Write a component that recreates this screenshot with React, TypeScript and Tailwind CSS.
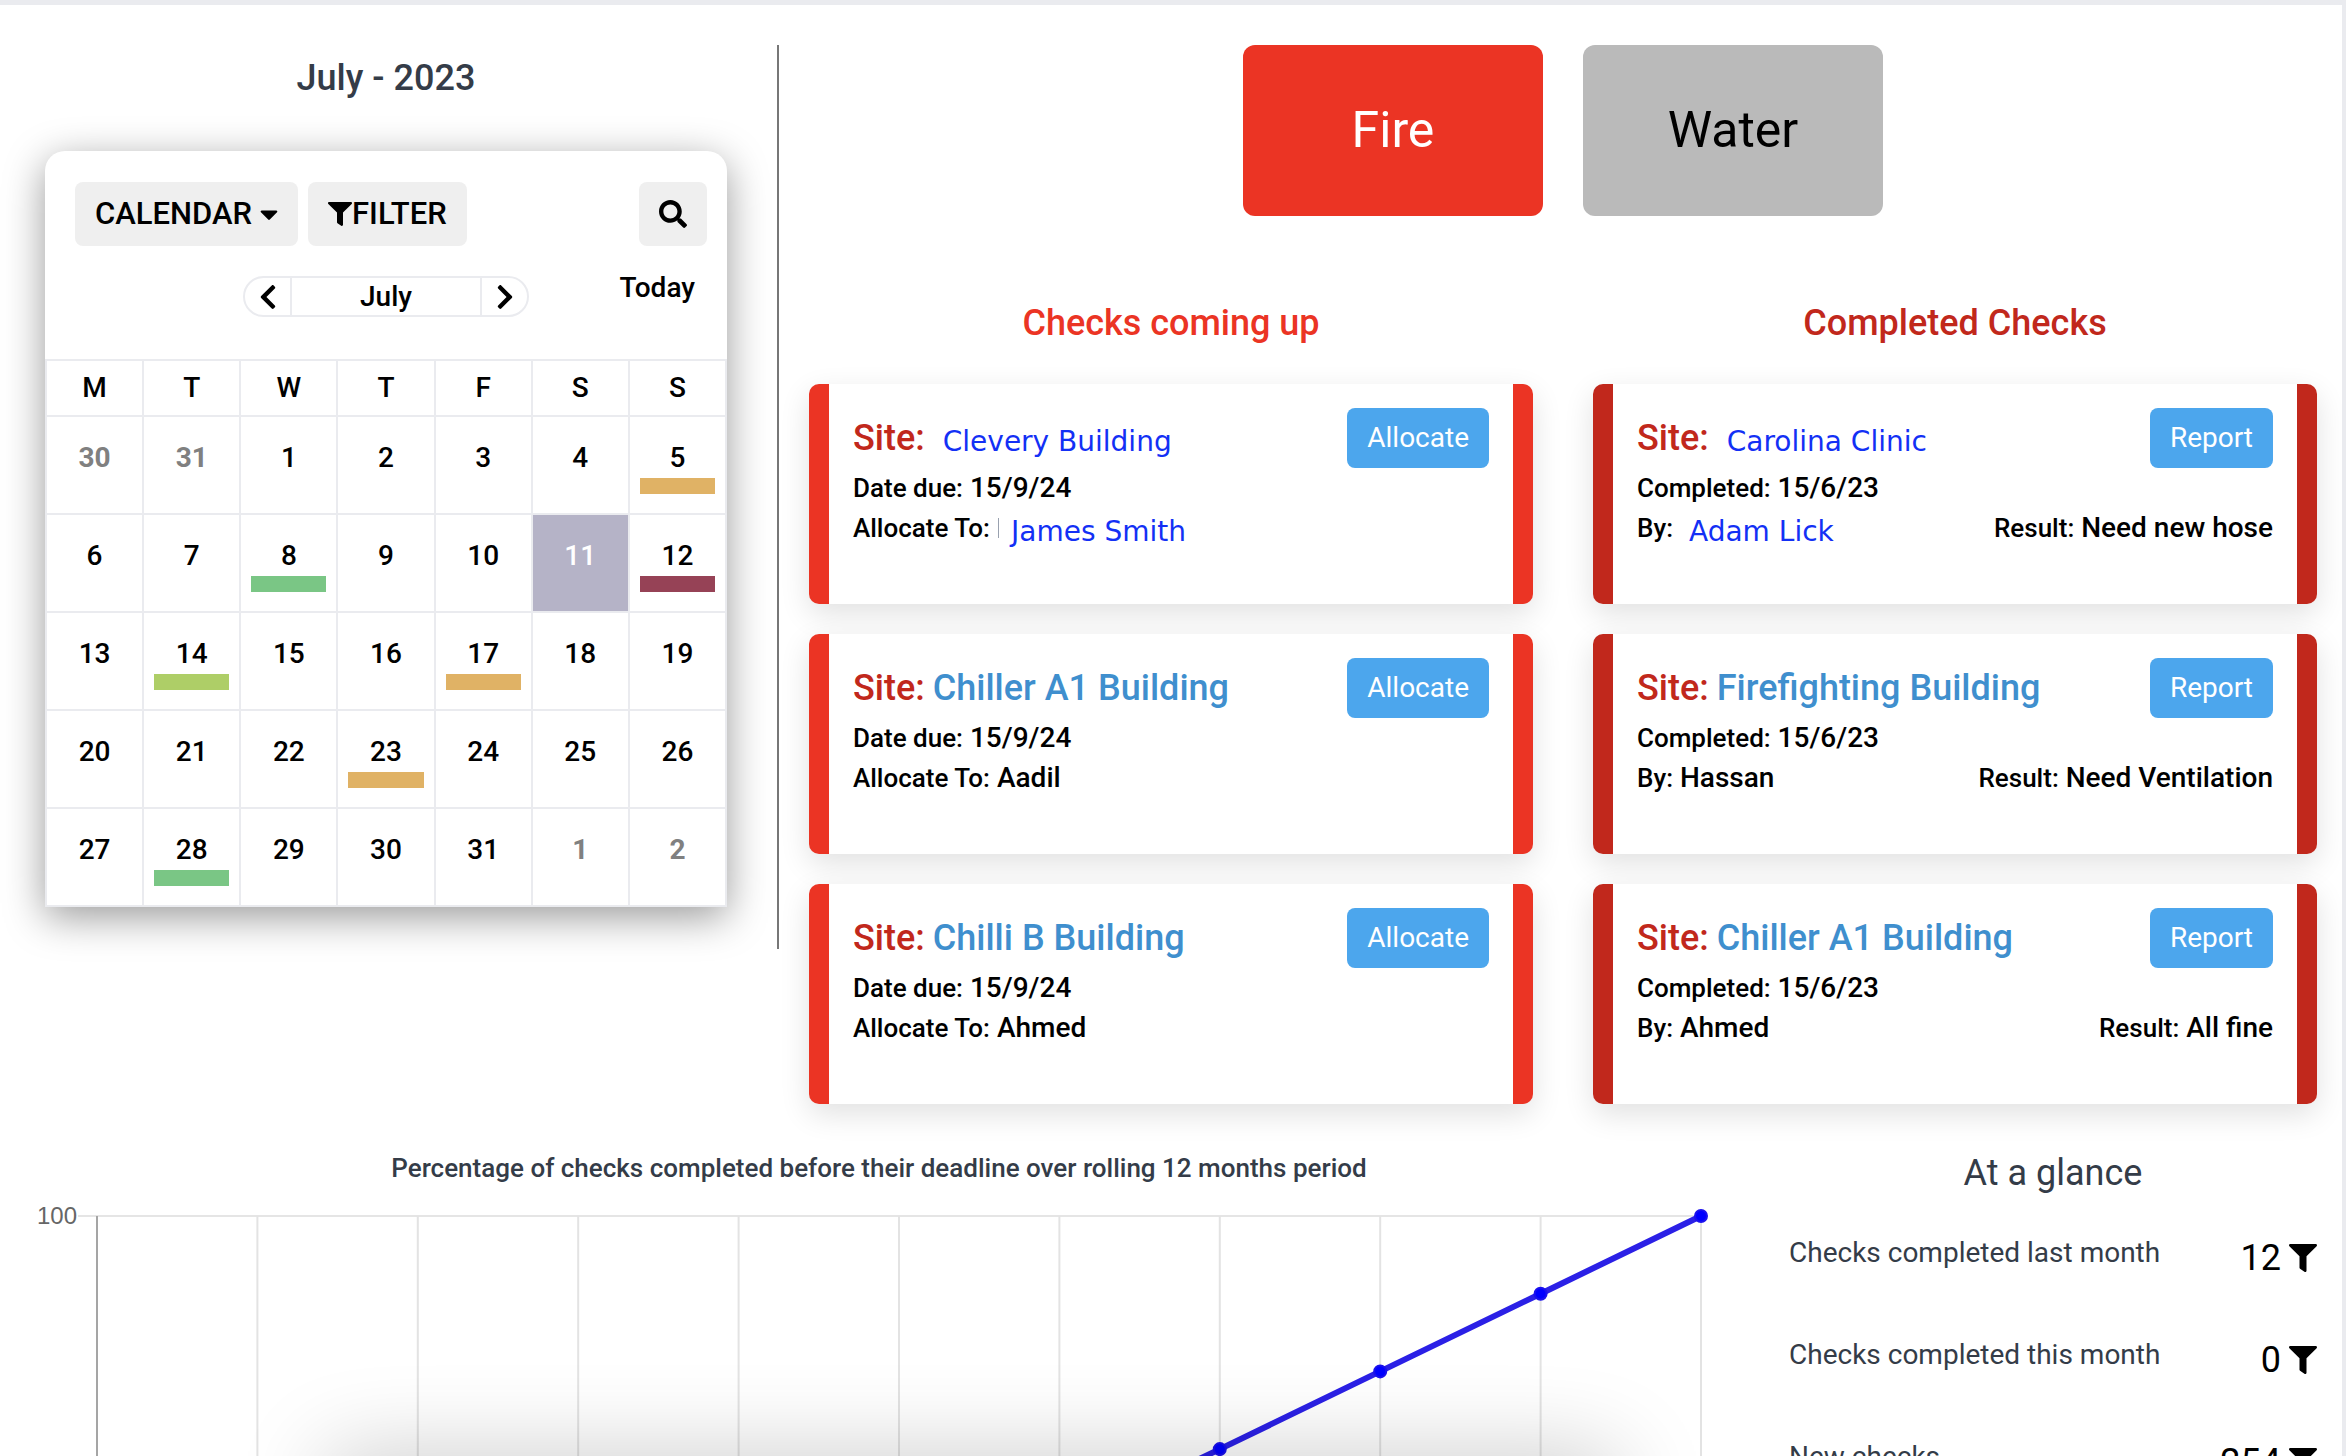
import { ReactNode } from "react"
import { FaCaretDown, FaChevronLeft, FaChevronRight, FaFilter, FaSearch } from "react-icons/fa"

type Day = {
    day: number,
    bar?: string,
    muted?: boolean,
    selected?: boolean
}

type Check = {
    id: number,
    site: string,
    person: string,
    result?: string,
    siteLink?: boolean,
    personLink?: boolean
}

const weekDays = ['M', 'T', 'W', 'T', 'F', 'S', 'S']

const amber = 'bg-[#e0b265]'
const green = 'bg-[#7ac685]'
const lime = 'bg-[#aece67]'
const wine = 'bg-[#964256]'

const weeks: Day[][] = [
    [{ day: 30, muted: true }, { day: 31, muted: true }, { day: 1 }, { day: 2 }, { day: 3 }, { day: 4 }, { day: 5, bar: amber }],
    [{ day: 6 }, { day: 7 }, { day: 8, bar: green }, { day: 9 }, { day: 10 }, { day: 11, selected: true }, { day: 12, bar: wine }],
    [{ day: 13 }, { day: 14, bar: lime }, { day: 15 }, { day: 16 }, { day: 17, bar: amber }, { day: 18 }, { day: 19 }],
    [{ day: 20 }, { day: 21 }, { day: 22 }, { day: 23, bar: amber }, { day: 24 }, { day: 25 }, { day: 26 }],
    [{ day: 27 }, { day: 28, bar: green }, { day: 29 }, { day: 30 }, { day: 31 }, { day: 1, muted: true }, { day: 2, muted: true }],
]

const upcoming: Check[] = [
    { id: 1, site: 'Clevery Building', person: 'James Smith', siteLink: true, personLink: true },
    { id: 2, site: 'Chiller A1 Building', person: 'Aadil' },
    { id: 3, site: 'Chilli B Building', person: 'Ahmed' },
]

const completed: Check[] = [
    { id: 1, site: 'Carolina Clinic', person: 'Adam Lick', result: 'Need new hose', siteLink: true, personLink: true },
    { id: 2, site: 'Firefighting Building', person: 'Hassan', result: 'Need Ventilation' },
    { id: 3, site: 'Chiller A1 Building', person: 'Ahmed', result: 'All fine' },
]

const stats = [
    { label: 'Checks completed last month', value: 12 },
    { label: 'Checks completed this month', value: 0 },
    { label: 'New checks', value: 254 },
]

function Calendar() {
    return (
        <section className="rounded-t-[20px] bg-white shadow-[0_10px_40px_rgba(0,0,0,0.4)]">
            <div className="flex items-center gap-[10px] px-[30px] pt-[31px] pr-5">
                <button className="flex h-16 items-center gap-2 rounded-lg bg-[#efefef] px-5 text-[31px] font-medium">
                    CALENDAR <FaCaretDown className="h-[30px] w-[18px]" />
                </button>
                <button className="flex h-16 items-center rounded-lg bg-[#efefef] px-5 text-[31px] font-medium">
                    <FaFilter className="size-6" />FILTER
                </button>
                <button aria-label="Search" className="ml-auto flex h-16 items-center rounded-lg bg-[#efefef] px-5">
                    <FaSearch className="size-7" />
                </button>
            </div>
            <div className="grid grid-cols-[1fr_286px_1fr] pt-[22px] pb-[42px]">
                <div className="col-start-2 mt-2 flex h-[41px] items-stretch rounded-full border-2 border-[#eaebef] text-[28px] font-medium">
                    <button aria-label="Previous month" className="flex w-[45px] items-center justify-center">
                        <FaChevronLeft className="size-7" />
                    </button>
                    <span className="flex flex-1 items-center justify-center border-x-2 border-[#eaebef]">July</span>
                    <button aria-label="Next month" className="flex w-[45px] items-center justify-center">
                        <FaChevronRight className="size-7" />
                    </button>
                </div>
                <button className="mr-8 self-start justify-self-end text-[28px] leading-10 font-medium">Today</button>
            </div>
            <table className="w-full table-fixed border-collapse text-center text-[28px] font-medium">
                <thead>
                    <tr className="h-14">
                        {weekDays.map((name, i) => (
                            <th key={i} className="border-2 border-[#eaebef] font-medium">{name}</th>
                        ))}
                    </tr>
                </thead>
                <tbody>
                    {weeks.map((week, i) => (
                        <tr key={i} className="h-[98px]">
                            {week.map((item, j) => (
                                <td
                                    key={j}
                                    className={`border-2 border-[#eaebef] px-[10px] align-top ${item.selected ? 'bg-[#b5b3c7] text-white' : ''} ${item.muted ? 'font-bold text-[#808080]' : ''}`}
                                >
                                    <div className="pt-[21px] leading-10">{item.day}</div>
                                    {item.bar && <div className={`h-4 ${item.bar}`}></div>}
                                </td>
                            ))}
                        </tr>
                    ))}
                </tbody>
            </table>
        </section>
    )
}

type CheckCardProps = {
    check: Check,
    border: string,
    action: string,
    dateLabel: string,
    date: string,
    personLabel: string
}

function CheckCard({ check, border, action, dateLabel, date, personLabel }: CheckCardProps) {
    return (
        <article className={`h-[220px] rounded-[10px] border-x-[20px] bg-white p-6 text-[28px] leading-10 font-medium whitespace-nowrap shadow-[0_10px_30px_rgba(0,0,0,0.12)] ${border}`}>
            <div className="flex h-15 items-center justify-between">
                <h3 className="flex items-center text-[36px] text-[#c1281c]">
                    Site:
                    {check.siteLink ?
                        <a href="#" className="pt-2 pl-[18px] font-['DejaVu_Sans',sans-serif] text-[28px] font-normal text-[#1330f5]">{check.site}</a>
                        :
                        <a href="#" className="pl-2 text-[#3f8fce]">{check.site}</a>
                    }
                </h3>
                <button className="h-15 rounded-lg bg-[#4ca6ed] px-5 font-normal text-white">{action}</button>
            </div>
            <p><span className="text-[26px]">{dateLabel}</span> {date}</p>
            <div className="flex h-10 justify-between">
                {check.personLink ?
                    <p className="flex items-center">
                        <span className="text-[26px]">{personLabel}</span>
                        {!check.result && <span className="ml-2 h-5 w-px bg-gray-400"></span>}
                        <a href="#" className={`pt-2 font-['DejaVu_Sans',sans-serif] font-normal text-[#1330f5] ${check.result ? 'pl-4' : 'pl-3'}`}>{check.person}</a>
                    </p>
                    :
                    <p><span className="text-[26px]">{personLabel}</span> {check.person}</p>
                }
                {check.result && <p><span className="text-[26px]">Result:</span> {check.result}</p>}
            </div>
        </article>
    )
}

function Column({ title, color, children }: { title: string, color: string, children: ReactNode }) {
    return (
        <section className="flex flex-col gap-10">
            <h2 className={`text-center text-[36px] leading-[42px] font-medium ${color}`}>{title}</h2>
            <div className="flex flex-col gap-[30px]">{children}</div>
        </section>
    )
}

function Chart() {
    const left = 73
    const top = 20
    const step = 160.4
    const drop = 77.7
    const points = [5, 6, 7, 8, 9, 10].map(i => ({ x: left + i * step, y: top + (10 - i) * drop }))

    return (
        <svg viewBox="0 0 1710 330" className="w-full" role="img" aria-label="Percentage of checks completed">
            <text x="53" y="28" textAnchor="end" fontSize="24" fill="#666" className="font-['Liberation_Sans',sans-serif]">100</text>
            <line x1="54" y1={top} x2={left + 10 * step} y2={top} stroke="#e5e5e5" strokeWidth="2" />
            {Array.from({ length: 11 }, (_, i) => (
                <line key={i} x1={left + i * step} y1={top} x2={left + i * step} y2="330" stroke={i === 0 ? '#a5a5a5' : '#e3e3e3'} strokeWidth="2" />
            ))}
            <polyline points={points.map(p => `${p.x},${p.y}`).join(' ')} fill="none" stroke="#2b20e6" strokeWidth="6" />
            {points.map(p => <circle key={p.x} cx={p.x} cy={p.y} r="6" fill="#00f" stroke="#1a10ee" strokeWidth="2" />)}
        </svg>
    )
}

export default function App() {
    return (
        <main className="relative h-screen overflow-hidden border-t-[5px] border-r-4 border-[#eaebef] bg-white font-[Roboto,sans-serif] text-black">
            <div className="flex pt-10 pr-[25px] pl-[45px]">
                <div className="w-[682px] shrink-0">
                    <h1 className="pb-10 text-center text-[36px] leading-[66px] font-medium text-[#343c48]">July - 2023</h1>
                    <Calendar />
                </div>
                <div className="ml-[50px] h-[904px] w-[2px] shrink-0 bg-[#777]"></div>
                <div className="ml-[30px] flex-1">
                    <div className="flex justify-center gap-10">
                        <button className="h-[171px] w-[300px] rounded-xl bg-[#eb3424] text-[50px] text-white">Fire</button>
                        <button className="h-[171px] w-[300px] rounded-xl bg-[#bababa] text-[50px]">Water</button>
                    </div>
                    <div className="grid grid-cols-2 gap-[60px] pt-[86px]">
                        <Column title="Checks coming up" color="text-[#eb3424]">
                            {upcoming.map(check => (
                                <CheckCard key={check.id} check={check} border="border-[#eb3424]" action="Allocate" dateLabel="Date due:" date="15/9/24" personLabel="Allocate To:" />
                            ))}
                        </Column>
                        <Column title="Completed Checks" color="text-[#c1281c]">
                            {completed.map(check => (
                                <CheckCard key={check.id} check={check} border="border-[#c1281c]" action="Report" dateLabel="Completed:" date="15/6/23" personLabel="By:" />
                            ))}
                        </Column>
                    </div>
                </div>
            </div>

            <div className="flex items-start gap-[55px] pt-11 pr-[25px] pl-6 text-[#343c48]">
                <section className="flex-1">
                    <h2 className="pb-2 text-center text-[26px] leading-10 font-medium">Percentage of checks completed before their deadline over rolling 12 months period</h2>
                    <Chart />
                </section>
                <section className="w-[528px]">
                    <h2 className="pb-[35px] text-center text-[36px] leading-[50px]">At a glance</h2>
                    <ul>
                        {stats.map(stat => (
                            <li key={stat.label} className="flex h-[102px] items-start justify-between">
                                <span className="text-[28px] leading-10">{stat.label}</span>
                                <span className="flex items-center gap-2 text-[36px] leading-[50px] text-black">
                                    {stat.value} <FaFilter className="size-7" />
                                </span>
                            </li>
                        ))}
                    </ul>
                </section>
            </div>

            <div className="pointer-events-none absolute top-full right-[31%] left-[14%] h-20 shadow-[0_0_90px_rgba(0,0,0,0.22)]"></div>
        </main>
    )
}
